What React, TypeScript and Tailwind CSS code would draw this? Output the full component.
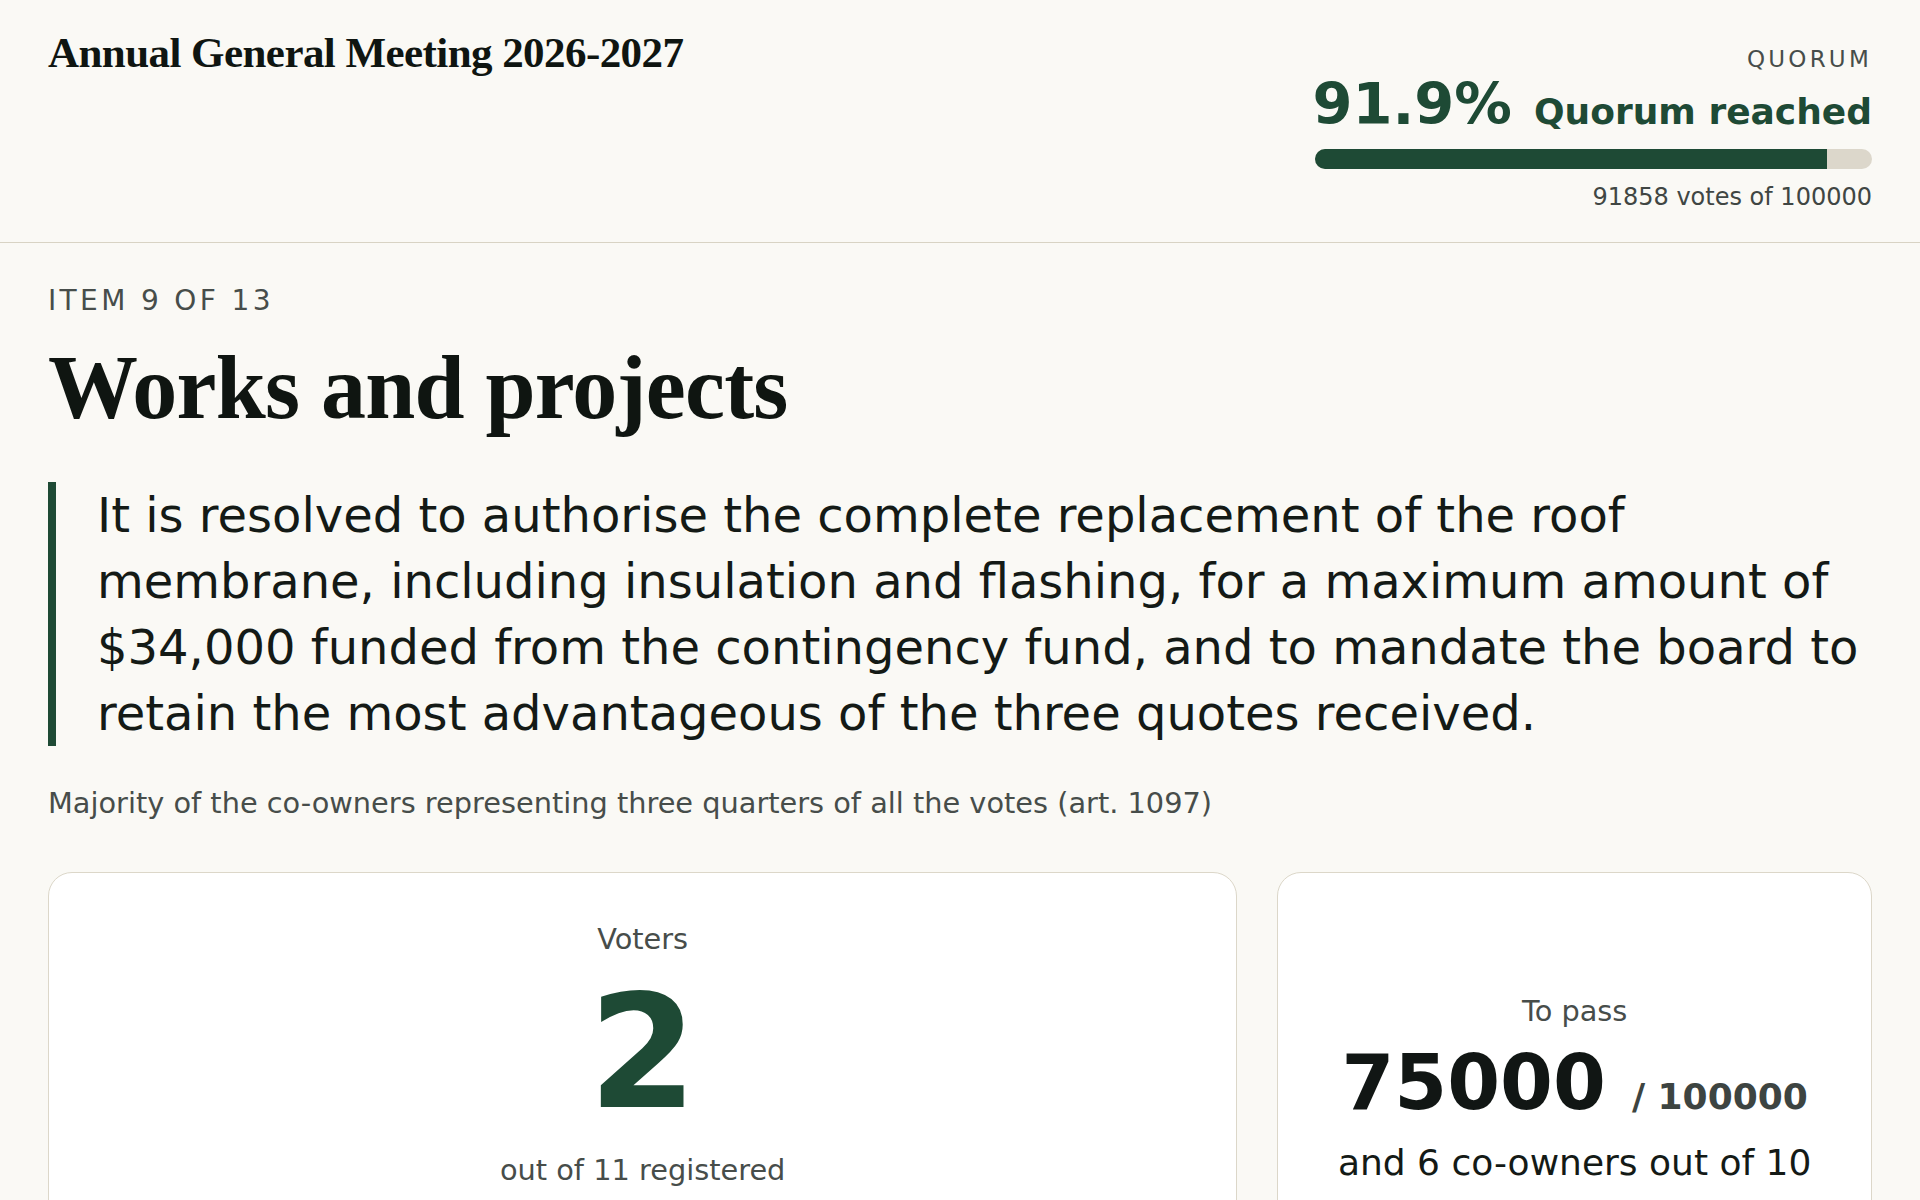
import React from "react";

const sans = { fontFamily: '"DejaVu Sans", Verdana, sans-serif' };

export default function App() {
  const quorumPct = (91858 / 100000) * 100;
  return (
    <div
      className="min-h-screen w-full bg-[#faf9f5] text-[#121814]"
      style={sans}
    >
      <header className="flex h-[243px] items-start justify-between border-b border-[#d8d3c4] px-[48px] pt-[27px]">
        <h1 className="font-['Liberation_Serif',_'Times_New_Roman',_serif] text-[43px] font-bold leading-[1.2] tracking-[-0.013em] text-[#0f1511]">
          Annual General Meeting 2026-2027
        </h1>
        <div className="mt-[18px] flex flex-col items-end">
          <div className="text-[23px] leading-[28px] tracking-[0.14em] text-[#474d4a]">
            QUORUM
          </div>
          <div className="mt-[3px] flex items-baseline gap-[22px] text-[#1e4a35]">
            <span className="text-[57.5px] font-bold leading-none">91.9%</span>
            <span className="text-[36px] font-bold leading-none">
              Quorum reached
            </span>
          </div>
          <div className="mt-[15px] h-[20px] w-[557px] overflow-hidden rounded-full bg-[#dcd7cb]">
            <div
              className="h-full bg-[#1e4a35]"
              style={{ width: `${quorumPct}%` }}
            />
          </div>
          <div className="mt-[13px] text-[24px] leading-[30px] text-[#404643]">
            91858 votes of 100000
          </div>
        </div>
      </header>

      <main className="px-[48px] pt-[41px] pb-[60px]">
        <div className="text-[28px] leading-[34px] tracking-[0.12em] text-[#474d4a]">
          ITEM 9 OF 13
        </div>
        <h2 className="mt-[20px] font-['Liberation_Serif',_'Times_New_Roman',_serif] text-[90px] font-bold leading-[1.1] tracking-[-0.0085em] text-[#0f1511]">
          Works and projects
        </h2>

        <div className="mt-[45px] flex">
          <div className="w-[8px] shrink-0 bg-[#1e4a35]" />
          <p className="pl-[41px] text-[48px] leading-[66px] text-[#141a16]">
            It is resolved to authorise the complete replacement of the roof
            membrane, including insulation and flashing, for a maximum amount
            of $34,000 funded from the contingency fund, and to mandate the
            board to retain the most advantageous of the three quotes received.
          </p>
        </div>

        <p className="mt-[40px] text-[28.8px] leading-[34px] text-[#474d4a]">
          Majority of the co-owners representing three quarters of all the votes
          (art. 1097)
        </p>

        <div className="mt-[52px] grid grid-cols-[2fr_1fr] gap-[40px]">
          <div className="flex min-h-[420px] flex-col items-center rounded-[24px] border border-[#dcd7c9] bg-white pt-[49px] pb-[40px]">
            <div className="text-[28.8px] leading-[34px] text-[#474d4a]">
              Voters
            </div>
            <div className="mt-[19px] text-[156px] font-bold leading-none text-[#1e4a35]">
              2
            </div>
            <div className="mt-[22px] text-[28.8px] leading-[34px] text-[#474d4a]">
              out of 11 registered
            </div>
          </div>
          <div className="flex min-h-[420px] flex-col items-center rounded-[24px] border border-[#dcd7c9] bg-white pt-[121px] pb-[40px]">
            <div className="text-[28.8px] leading-[34px] text-[#474d4a]">
              To pass
            </div>
            <div className="mt-[17px] flex items-baseline gap-[26px]">
              <span className="text-[76px] font-bold leading-none text-[#111614]">
                75000
              </span>
              <span className="text-[36px] font-bold leading-none text-[#3d4441]">
                / 100000
              </span>
            </div>
            <div className="mt-[20px] text-[36px] leading-[44px] text-[#141a16]">
              and 6 co-owners out of 10
            </div>
          </div>
        </div>
      </main>
    </div>
  );
}
